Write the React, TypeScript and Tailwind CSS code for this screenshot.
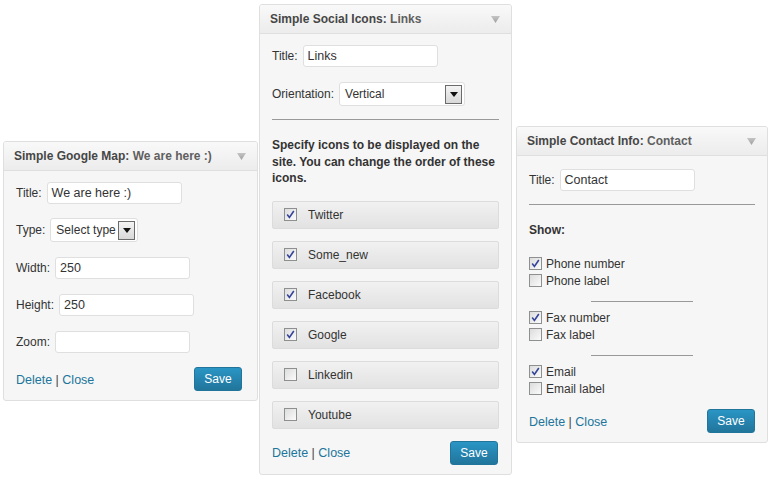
import React from 'react';

const font = "font-['Liberation_Sans',Arial,sans-serif]";

function Panel({ title, sub, className, children, pt = 'pt-[11px]' }: { title: string; sub: string; className: string; children: React.ReactNode; pt?: string }) {
  return (
    <div className={`${className} shrink-0 rounded-[3px] border border-[#dfdfdf] bg-[#f6f6f6] overflow-hidden`}>
      <div className="flex h-[29px] items-center justify-between border-b border-[#dfdfdf] bg-gradient-to-b from-[#f9f9f9] to-[#ececec] pl-[10px] pr-[11px]">
        <div className="text-[12px] font-bold text-[#464646]">
          {title}: <span className="text-[#5f5f5f]">{sub}</span>
        </div>
        <svg width="9" height="7" viewBox="0 0 9 7">
          <defs>
            <linearGradient id="tri" x1="0" y1="0" x2="0" y2="1">
              <stop offset="0" stopColor="#c4c4c4" />
              <stop offset="1" stopColor="#a0a0a0" />
            </linearGradient>
          </defs>
          <polygon points="0,0 9,0 4.5,7" fill="url(#tri)" />
        </svg>
      </div>
      <div className={`px-[12px] ${pt} pb-[9px]`}>{children}</div>
    </div>
  );
}

function TextInput({ value, w = 'w-[135px]' }: { value: string; w?: string }) {
  return (
    <div className={`${w} h-[22px] rounded-[3px] border border-[#dfdfdf] bg-white px-[4px] text-[12.5px] leading-[20px] text-[#333]`}>
      {value}
    </div>
  );
}

function Select({ value, w }: { value: string; w: string }) {
  return (
    <div className={`${w} flex h-[24px] items-center justify-between whitespace-nowrap rounded-[3px] border border-[#dfdfdf] bg-white pl-[5px] pr-[2px] text-[12px] text-[#333]`}>
      <span>{value}</span>
      <div className="flex h-[19px] w-[17px] shrink-0 items-center justify-center border border-[#6b6b6b] bg-gradient-to-b from-[#f4f4f4] to-[#d8d8d8]">
        <svg width="8" height="5" viewBox="0 0 8 5">
          <polygon points="0,0 8,0 4,5" fill="#111" />
        </svg>
      </div>
    </div>
  );
}

function Field({ label, children, mb = 'mb-[15px]' }: { label: string; children: React.ReactNode; mb?: string }) {
  return (
    <div className={`flex items-center gap-[5px] ${mb}`}>
      <span className="text-[12px] text-[#333]">{label}</span>
      {children}
    </div>
  );
}

function Check({ on }: { on: boolean }) {
  return (
    <div className="flex h-[13px] w-[13px] shrink-0 items-center justify-center border border-[#8e8f8f] bg-gradient-to-br from-[#dcdcdc] to-[#fbfbfb]">
      {on && (
        <svg width="9" height="9" viewBox="0 0 9 9">
          <path d="M1.2 4.6 L3.4 7.4 L7.8 1" stroke="#33449a" strokeWidth="1.6" fill="none" />
        </svg>
      )}
    </div>
  );
}

function Footer({ pr = '' }: { pr?: string }) {
  return (
    <div className={`flex items-center justify-between ${pr}`}>
      <div className="pt-[2px] text-[12.5px] text-[#21759b]">
        Delete <span className="text-[#444]">|</span> Close
      </div>
      <button className="h-[24px] w-[48px] rounded-[3px] border border-[#21759b] bg-gradient-to-b from-[#2a95c5] to-[#21759b] text-[12px] text-white">
        Save
      </button>
    </div>
  );
}

const icons = [
  ['Twitter', true],
  ['Some_new', true],
  ['Facebook', true],
  ['Google', true],
  ['Linkedin', false],
  ['Youtube', false],
] as const;

function Row({ label, on }: { label: string; on: boolean }) {
  return (
    <div className="mb-[12px] flex h-[28px] items-center gap-[11px] rounded-[2px] border border-[#dcdcdc] bg-gradient-to-b from-[#f1f1f1] to-[#e2e2e2] pl-[11px] text-[12px] text-[#333]">
      <Check on={on} />
      <span>{label}</span>
    </div>
  );
}

function ContactCheck({ label, on }: { label: string; on: boolean }) {
  return (
    <div className="flex h-[17px] items-center gap-[4px] text-[12px] text-[#333]">
      <Check on={on} />
      <span>{label}</span>
    </div>
  );
}

export default function App() {
  return (
    <div className={`${font} flex h-[480px] w-[770px] items-start bg-white`}>
      <Panel title="Simple Google Map" sub="We are here :)" className="ml-[3px] mt-[141px] w-[255px]">
        <Field label="Title:" mb="mb-[14px]">
          <TextInput value="We are here :)" />
        </Field>
        <Field label="Type:">
          <Select value="Select type" w="w-[88px]" />
        </Field>
        <Field label="Width:">
          <TextInput value="250" />
        </Field>
        <Field label="Height:">
          <TextInput value="250" />
        </Field>
        <Field label="Zoom:" mb="mb-[14px]">
          <TextInput value="" />
        </Field>
        <Footer pr="pr-[3px]" />
      </Panel>

      <Panel title="Simple Social Icons" sub="Links" className="ml-[1px] mt-[4px] w-[253px]">
        <Field label="Title:">
          <TextInput value="Links" />
        </Field>
        <Field label="Orientation:" mb="mb-[13px]">
          <Select value="Vertical" w="w-[126px]" />
        </Field>
        <div className="border-t border-[#999] mb-[17px]" />
        <p className="mb-[14px] text-[12px] font-bold leading-[16.5px] text-[#333]">
          Specify icons to be displayed on the site. You can change the order of these icons.
        </p>
        {icons.map(([label, on]) => (
          <Row key={label} label={label} on={on} />
        ))}
        <Footer pr="pr-[1px]" />
      </Panel>

      <Panel title="Simple Contact Info" sub="Contact" className="ml-[4px] mt-[126px] w-[252px]" pt="pt-[13px]">
        <Field label="Title:" mb="mb-[13px]">
          <TextInput value="Contact" />
        </Field>
        <div className="border-t border-[#999] mb-[16px]" />
        <div className="mb-[16px] text-[12px] font-bold text-[#333]">Show:</div>
        <ContactCheck label="Phone number" on={true} />
        <ContactCheck label="Phone label" on={false} />
        <div className="mx-auto mt-[12px] mb-[7px] w-[102px] border-t border-[#999]" />
        <ContactCheck label="Fax number" on={true} />
        <ContactCheck label="Fax label" on={false} />
        <div className="mx-auto mt-[12px] mb-[7px] w-[102px] border-t border-[#999]" />
        <ContactCheck label="Email" on={true} />
        <ContactCheck label="Email label" on={false} />
        <div className="mt-[12px]">
          <Footer />
        </div>
      </Panel>
    </div>
  );
}
